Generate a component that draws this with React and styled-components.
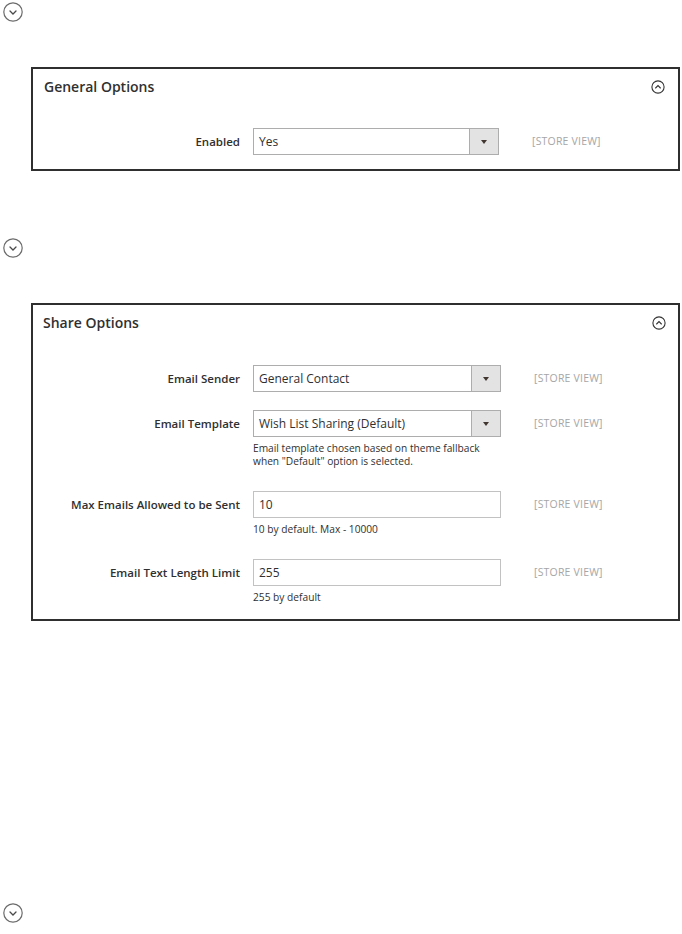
import React from "react";
import styled, { createGlobalStyle } from "styled-components";

const GlobalStyle = createGlobalStyle`
  html, body {
    margin: 0;
    padding: 0;
    background: #fff;
  }
  body {
    font-family: "Open Sans", "Liberation Sans", Arial, sans-serif;
    color: #303030;
  }
`;

const Page = styled.div`
  width: 682px;
  height: 934px;
  overflow: hidden;
  display: flex;
  flex-direction: column;
  align-items: flex-start;
`;

const ExpandIcon = styled.svg`
  display: block;
  width: 20px;
  height: 20px;
  margin-left: 3px;
  margin-top: ${(p) => p.$top}px;
  flex-shrink: 0;
`;

const Panel = styled.section`
  box-sizing: border-box;
  width: 649px;
  margin-left: 31px;
  margin-top: ${(p) => p.$top}px;
  border: 2px solid #2f2f2f;
  padding: 8px 10px ${(p) => p.$bottom}px 10px;
  background: #fff;
`;

const PanelHead = styled.div`
  display: flex;
  align-items: center;
  justify-content: space-between;
  height: 20px;
  margin-left: ${(p) => p.$shift || 0}px;
`;

const Title = styled.h2`
  margin: 0;
  font-size: 14px;
  font-weight: 600;
  color: #303030;
  line-height: 20px;
`;

const CollapseIcon = styled.svg`
  display: block;
  width: 14px;
  height: 14px;
  margin-right: ${(p) => p.$right}px;
`;

const Rows = styled.div`
  display: flex;
  flex-direction: column;
  gap: ${(p) => p.$gap}px;
  margin-top: ${(p) => p.$top}px;
`;

const Row = styled.div`
  display: grid;
  grid-template-columns: 210px ${(p) => p.$w}px auto;
  align-items: start;
`;

const Label = styled.label`
  font-size: 11.5px;
  font-weight: 600;
  color: #303030;
  text-align: right;
  padding-right: 13px;
  line-height: 27px;
  white-space: nowrap;
`;

const Field = styled.div`
  display: flex;
  flex-direction: column;
`;

const SelectBox = styled.div`
  box-sizing: border-box;
  height: 27px;
  border: 1px solid #adadad;
  display: flex;
  align-items: stretch;
  background: #fff;
`;

const SelectText = styled.span`
  flex: 1;
  font-size: 12px;
  line-height: 25px;
  padding-left: 5px;
  color: #303030;
`;

const ArrowBox = styled.span`
  width: 28px;
  background: #e3e3e3;
  border-left: 1px solid #adadad;
  display: flex;
  align-items: center;
  justify-content: center;
  &::after {
    content: "";
    width: 0;
    height: 0;
    border-left: 3px solid transparent;
    border-right: 3px solid transparent;
    border-top: 4px solid #41362f;
  }
`;

const TextInput = styled.div`
  box-sizing: border-box;
  height: 27px;
  border: 1px solid #c2c2c2;
  font-size: 12px;
  line-height: 25px;
  padding-left: 5px;
  color: #303030;
`;

const Note = styled.div`
  font-size: 10.2px;
  line-height: 13px;
  margin-top: 5px;
  margin-bottom: 5px;
  color: #303030;
`;

const Scope = styled.span`
  font-size: 10.5px;
  line-height: 27px;
  color: #a6a6a6;
  margin-left: 33px;
  letter-spacing: 0.2px;
  white-space: nowrap;
`;

function CircleChevron({ up, top }) {
  const d = up ? "M7 11.5 L10 8.5 L13 11.5" : "M7 9 L10 12 L13 9";
  return (
    <ExpandIcon $top={top} viewBox="0 0 20 20">
      <circle cx="10" cy="10" r="9.2" fill="none" stroke="#6b6b6b" strokeWidth="1.2" />
      <path d={d} fill="none" stroke="#4a4a4a" strokeWidth="1.3" strokeLinecap="round" />
    </ExpandIcon>
  );
}

function PanelToggle({ right }) {
  return (
    <CollapseIcon $right={right} viewBox="0 0 14 14">
      <circle cx="7" cy="7" r="6.1" fill="none" stroke="#333" strokeWidth="1.1" />
      <path d="M4.6 8 L7 5.6 L9.4 8" fill="none" stroke="#333" strokeWidth="1.1" strokeLinecap="round" />
    </CollapseIcon>
  );
}

function Select({ value }) {
  return (
    <SelectBox>
      <SelectText>{value}</SelectText>
      <ArrowBox />
    </SelectBox>
  );
}

function FormRow({ label, width, children, note }) {
  return (
    <Row $w={width}>
      <Label>{label}</Label>
      <Field>
        {children}
        {note && <Note>{note}</Note>}
      </Field>
      <Scope>[STORE VIEW]</Scope>
    </Row>
  );
}

export default function App() {
  return (
    <>
      <GlobalStyle />
      <Page>
        <CircleChevron top={2} />

        <Panel $top={45} $bottom={14}>
          <PanelHead $shift={1}>
            <Title>General Options</Title>
            <PanelToggle right={3} />
          </PanelHead>
          <Rows $top={31} $gap={0}>
            <FormRow label="Enabled" width={246}>
              <Select value="Yes" />
            </FormRow>
          </Rows>
        </Panel>

        <CircleChevron top={67} />

        <Panel $top={45} $bottom={10}>
          <PanelHead>
            <Title>Share Options</Title>
            <PanelToggle right={2} />
          </PanelHead>
          <Rows $top={32} $gap={18}>
            <FormRow label="Email Sender" width={248}>
              <Select value="General Contact" />
            </FormRow>
            <FormRow
              label="Email Template"
              width={248}
              note={
                <>
                  Email template chosen based on theme fallback
                  <br />
                  when "Default" option is selected.
                </>
              }
            >
              <Select value="Wish List Sharing (Default)" />
            </FormRow>
            <FormRow label="Max Emails Allowed to be Sent" width={248} note="10 by default. Max - 10000">
              <TextInput>10</TextInput>
            </FormRow>
            <FormRow label="Email Text Length Limit" width={248} note="255 by default">
              <TextInput>255</TextInput>
            </FormRow>
          </Rows>
        </Panel>

        <CircleChevron top={282} />
      </Page>
    </>
  );
}
